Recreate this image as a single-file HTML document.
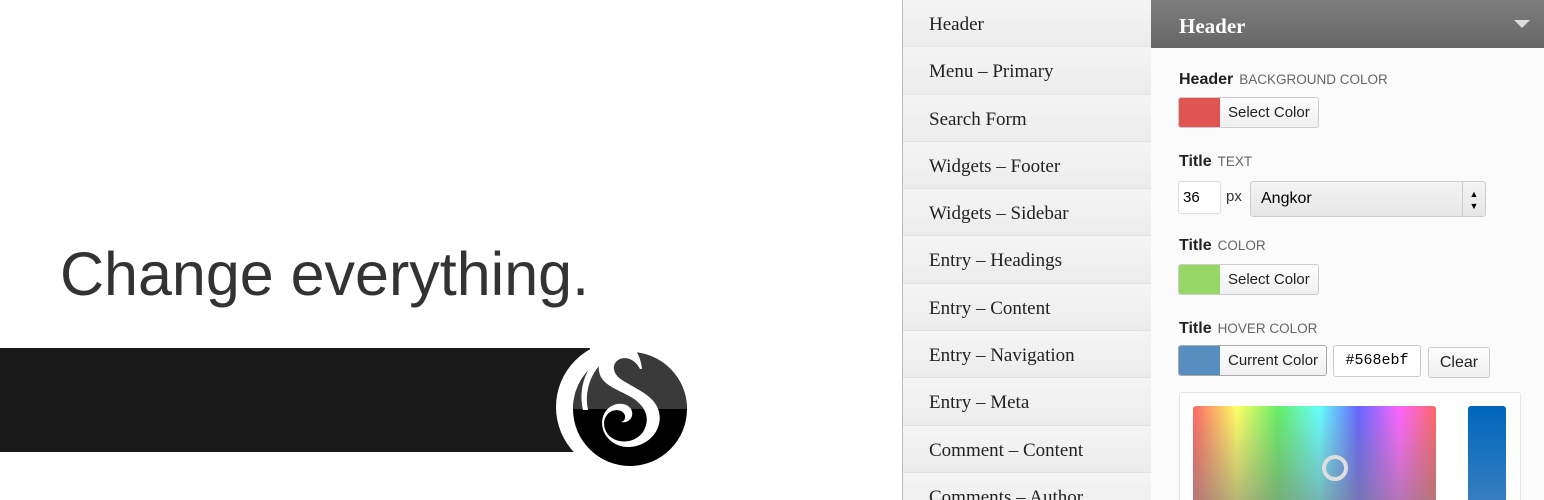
<!DOCTYPE html>
<html><head><meta charset="utf-8"><style>
*{margin:0;padding:0;box-sizing:border-box}
html,body{width:1544px;height:500px;overflow:hidden}
body{background:#fff;position:relative;font-family:"Liberation Sans",sans-serif}
.h1{position:absolute;left:60px;top:239px;font-size:61px;color:#333}
.band{position:absolute;left:0;top:348px;width:590px;height:104px;background:#1a1a1a}
.side{position:absolute;left:902px;top:0;width:249px;height:500px;border-left:1px solid #bbb;background:#f0f0f0;overflow:hidden}
.side div{height:47.3px;border-bottom:1px solid #e2e2e2;background:linear-gradient(#f5f5f5,#ececec);font-family:"Liberation Serif",serif;font-size:19px;color:#222;padding-left:26px;line-height:50px}
.panel{position:absolute;left:1151px;top:0;width:393px;height:500px;background:#fbfbfb;overflow:hidden}
.bar{height:48px;background:linear-gradient(#7e7e7e,#666);color:#fff;font-family:"Liberation Serif",serif;font-weight:bold;font-size:21px;line-height:52px;padding-left:28px;position:relative}
.bar:after{content:"";position:absolute;right:14px;top:20px;border-left:8px solid transparent;border-right:8px solid transparent;border-top:8px solid #ddd}
.lab{position:absolute;left:28px;font-size:16px;font-weight:bold;color:#222}
.lab span{font-weight:normal;font-size:13.5px;color:#666;margin-left:6px}
.btn{position:absolute;height:31px;border:1px solid #ccc;border-radius:3px;background:linear-gradient(#fdfdfd,#f0f0f0);font-size:15px;color:#222;line-height:29px;display:flex;overflow:hidden}
.btn i{display:block;width:41px;height:100%}
.btn b{font-weight:normal;padding:0 8px}
</style></head><body>
<div class="h1">Change everything.</div>
<div class="band"></div>
<svg style="position:absolute;left:550px;top:340px" width="145" height="135" viewBox="550 340 145 135">
<circle cx="622" cy="407" r="66" fill="#fff"/>
<circle cx="630" cy="409" r="57" fill="#000"/>
<path d="M573 409a57 57 0 0 1 114 0z" fill="#3a3a3a"/>
<path d="M583 410a48 52 0 0 1 30-62l3 6a44 48 0 0 0-28 56z" fill="#fff"/>
<path d="M632 347c-20-4-35 8-33 24 2 14 18 18 32 26 15 9 20 22 12 35-10 14-33 12-38-3-4-12 6-22 16-18 6 3 5 10 0 11 8 2 14-6 10-13-6-9-22-6-27 5-7 16 6 33 24 33 22 0 37-20 30-38-5-14-22-20-36-29-10-6-11-17-2-21 8-3 16 2 20 10l2 0c-1-9-4-18-10-21z" fill="#fff"/>
</svg>
<div class="side">
<div>Header</div><div>Menu – Primary</div><div>Search Form</div><div>Widgets – Footer</div><div>Widgets – Sidebar</div><div>Entry – Headings</div><div>Entry – Content</div><div>Entry – Navigation</div><div>Entry – Meta</div><div>Comment – Content</div><div>Comments – Author</div>
</div>
<div class="panel">
<div class="bar">Header</div>
<div class="lab" style="top:71px">Header<span>BACKGROUND COLOR</span></div>
<div class="btn" style="left:27px;top:97px"><i style="background:#e05552"></i><b>Select Color</b></div>
<div class="lab" style="top:153px">Title<span>TEXT</span></div>
<div style="position:absolute;left:27px;top:181px;width:43px;height:33px;border:1px solid #ddd;border-radius:3px;background:#fff;font-size:15px;line-height:31px;padding-left:4px">36</div>
<div style="position:absolute;left:75px;top:188px;font-size:15px;color:#333">px</div>
<div style="position:absolute;left:99px;top:181px;width:236px;height:36px;border:1px solid #ccc;border-radius:3px;background:linear-gradient(#f4f4f4,#e6e6e6);font-size:16px;line-height:34px;padding-left:10px">Angkor<span style="position:absolute;right:0;top:0;width:23px;height:34px;border-left:1px solid #ccc;font-size:9px;text-align:center;line-height:12px;padding-top:6px">▲<br>▼</span></div>
<div class="lab" style="top:237px">Title<span>COLOR</span></div>
<div class="btn" style="left:27px;top:264px"><i style="background:#96d766"></i><b>Select Color</b></div>
<div class="lab" style="top:320px">Title<span>HOVER COLOR</span></div>
<div class="btn" style="left:27px;top:345px;border-color:#aaa"><i style="background:#568ebf"></i><b>Current Color</b></div>
<div style="position:absolute;left:182px;top:345px;width:88px;height:32px;border:1px solid #ccc;border-radius:3px;background:#fff;font-family:'Liberation Mono',monospace;font-size:15px;line-height:30px;text-align:center">#568ebf</div>
<div class="btn" style="left:277px;top:347px;width:62px;justify-content:center;font-size:16px">Clear</div>
<div style="position:absolute;left:28px;top:392px;width:342px;height:120px;border:1px solid #e5e5e5;border-radius:3px;background:#fff"></div>
<div style="position:absolute;left:42px;top:406px;width:243px;height:100px;border-radius:3px;background:linear-gradient(rgba(128,128,128,0),rgba(128,128,128,.6)),linear-gradient(90deg,#f66,#ff6 18%,#6e6 35%,#6ff 52%,#66f 68%,#f6f 85%,#f66)"></div>
<div style="position:absolute;left:171px;top:455px;width:26px;height:26px;border:4px solid #ddd;border-radius:50%"></div>
<div style="position:absolute;left:317px;top:406px;width:38px;height:100px;border-radius:3px;background:linear-gradient(#0066bb,#3a80c0)"></div>
</div>
</body></html>
